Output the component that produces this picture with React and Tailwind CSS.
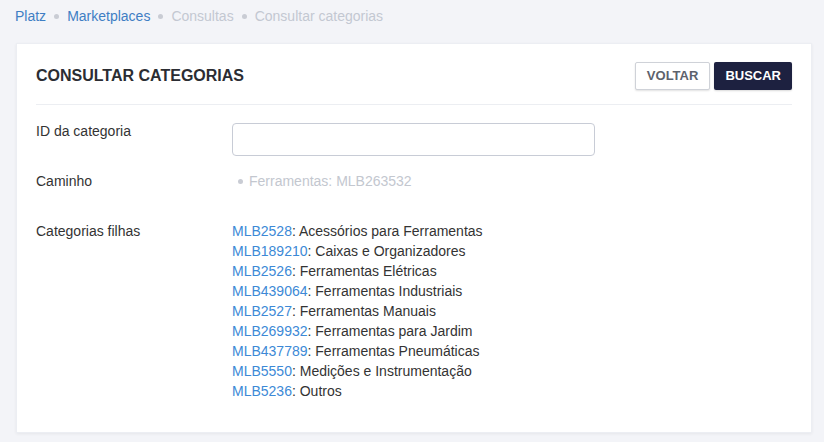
import React from 'react';

const filhas = [
  { id: 'MLB2528', nome: 'Acessórios para Ferramentas' },
  { id: 'MLB189210', nome: 'Caixas e Organizadores' },
  { id: 'MLB2526', nome: 'Ferramentas Elétricas' },
  { id: 'MLB439064', nome: 'Ferramentas Industriais' },
  { id: 'MLB2527', nome: 'Ferramentas Manuais' },
  { id: 'MLB269932', nome: 'Ferramentas para Jardim' },
  { id: 'MLB437789', nome: 'Ferramentas Pneumáticas' },
  { id: 'MLB5550', nome: 'Medições e Instrumentação' },
  { id: 'MLB5236', nome: 'Outros' },
];

const Dot = () => <span className="mx-[8px] inline-block w-[5px] h-[5px] rounded-full bg-[#c9ccd4]" />;

const App = () => {
  return (
    <div className="min-h-screen bg-[#f3f4f8] pl-4 pr-3 pb-[10px] font-['Liberation_Sans',Arial,sans-serif] text-[14px] text-[#333]">
      {/* Breadcrumb */}
      <div className="flex items-center h-[32px] -ml-px leading-5">
        <a className="text-[#3f7ec4]">Platz</a>
        <Dot />
        <a className="text-[#3f7ec4]">Marketplaces</a>
        <Dot />
        <span className="text-[#c3c8d2]">Consultas</span>
        <Dot />
        <span className="text-[#c3c8d2]">Consultar categorias</span>
      </div>

      {/* Card */}
      <div className="mt-[11px] bg-white border border-[#eceef3] shadow-[0_1px_3px_rgba(0,0,0,0.06)] px-[19px]">
        <div className="flex items-center justify-between pt-[18px] pb-[14px] border-b border-[#eceef2]">
          <h1 className="text-[16px] font-bold text-[#2b2d33]">CONSULTAR CATEGORIAS</h1>
          <div className="flex gap-1">
            <button className="h-7 px-[11px] bg-white border border-[#cfd2d8] rounded-[2px] shadow-[0_1px_2px_rgba(0,0,0,0.12)] text-[13px] font-bold text-[#5d626c]">
              VOLTAR
            </button>
            <button className="h-7 px-[11px] bg-[#1d2140] rounded-[2px] shadow-[0_1px_2px_rgba(0,0,0,0.15)] text-[13px] font-bold text-white">
              BUSCAR
            </button>
          </div>
        </div>

        <div className="grid grid-cols-[196px_1fr] pt-[15px] pb-[31px] leading-5">
          <div className="pt-[1px]">ID da categoria</div>
          <div>
            <input
              type="text"
              className="mt-[3px] w-[363px] h-[33px] border border-[#c8ccd6] rounded-[4px] px-3 outline-none"
            />
          </div>

          <div className="mt-[15px]">Caminho</div>
          <div className="mt-[15px] flex items-center text-[#c3c7cf]">
            <span className="ml-[6px] mr-[6px] inline-block w-[5px] h-[5px] rounded-full bg-[#c9ccd4]" />
            Ferramentas: MLB263532
          </div>

          <div className="mt-[30px]">Categorias filhas</div>
          <div className="mt-[30px]">
            {filhas.map((f) => (
              <div key={f.id}>
                <a className="text-[#3c89d6]">{f.id}</a>: {f.nome}
              </div>
            ))}
          </div>
        </div>
      </div>
    </div>
  );
};

export default App;
